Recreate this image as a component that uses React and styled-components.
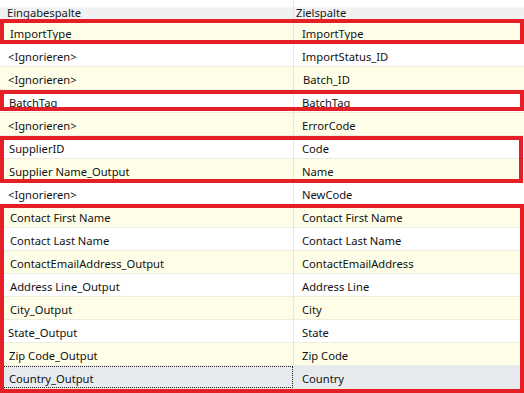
import React from "react";
import styled, { createGlobalStyle } from "styled-components";

const GlobalStyle = createGlobalStyle`
  html, body {
    margin: 0;
    padding: 0;
    background: #fff;
  }
  body {
    font-family: "Segoe UI", "Noto Sans", "Liberation Sans", sans-serif;
    font-size: 11.2px;
    color: #111;
  }
`;

const rowColors = {
  odd: "#fefee8",
  even: "#ffffff",
  selected: "#e7ebf0",
};

const Page = styled.div`
  width: 524px;
  height: 393px;
  overflow: hidden;
  background: #fff;
`;

const HeaderRow = styled.div`
  display: grid;
  grid-template-columns: 293px 1fr;
  height: 21px;
  background: linear-gradient(#ffffff 0%, #ffffff 30%, #f0f1f3 38%, #eff0f2 100%);
`;

const HeaderCell = styled.div`
  display: flex;
  align-items: flex-end;
  padding: 0 0 1px ${(p) => p.pad}px;
  line-height: 14px;
  color: #1a1a1a;
  border-left: ${(p) => (p.divider ? "1px solid #e4e4e4" : "none")};
`;

const Group = styled.div`
  position: relative;

  &::after {
    content: "";
    display: ${(p) => (p.marked ? "block" : "none")};
    position: absolute;
    top: ${(p) => p.top || 0}px;
    bottom: ${(p) => p.bottom || 0}px;
    left: 0;
    right: ${(p) => p.right || 0}px;
    border: 4px solid #e41f26;
    pointer-events: none;
    z-index: 2;
  }
`;

const Row = styled.div`
  display: grid;
  grid-template-columns: 293px 1fr;
  height: 23px;
  box-sizing: border-box;
  border-bottom: 1px solid #ececdf;
  background: ${(p) => rowColors[p.tone]};
`;

const Cell = styled.div`
  display: flex;
  align-items: center;
  padding: 2px 0 0 ${(p) => p.pad}px;
  white-space: nowrap;
  border-left: ${(p) => (p.divider ? "1px solid #e6e6dc" : "none")};
  outline: ${(p) => (p.focused ? "1px dotted #222" : "none")};
  outline-offset: -1px;
`;

const groups = [
  { marked: true, top: -2, bottom: 0, rows: [["ImportType", "ImportType", 10, 8]] },
  {
    marked: false,
    rows: [
      ["<Ignorieren>", "ImportStatus_ID", 8, 8],
      ["<Ignorieren>", "Batch_ID", 8, 9],
    ],
  },
  { marked: true, top: 0, bottom: 2, rows: [["BatchTag", "BatchTag", 9, 8]] },
  { marked: false, rows: [["<Ignorieren>", "ErrorCode", 8, 8]] },
  {
    marked: true,
    top: 0,
    bottom: -1,
    right: 1,
    rows: [
      ["SupplierID", "Code", 9, 8],
      ["Supplier Name_Output", "Name", 9, 8],
    ],
  },
  { marked: false, rows: [["<Ignorieren>", "NewCode", 8, 8]] },
  {
    marked: true,
    top: -1,
    bottom: -4,
    rows: [
      ["Contact First Name", "Contact First Name", 10, 8],
      ["Contact Last Name", "Contact Last Name", 10, 8],
      ["ContactEmailAddress_Output", "ContactEmailAddress", 10, 8],
      ["Address Line_Output", "Address Line", 10, 8],
      ["City_Output", "City", 10, 8],
      ["State_Output", "State", 8, 8],
      ["Zip Code_Output", "Zip Code", 9, 8],
      ["Country_Output", "Country", 9, 8, true],
    ],
  },
];

export default function App() {
  let index = 0;
  return (
    <Page>
      <GlobalStyle />
      <HeaderRow>
        <HeaderCell pad={7}>Eingabespalte</HeaderCell>
        <HeaderCell pad={2} divider>
          Zielspalte
        </HeaderCell>
      </HeaderRow>
      {groups.map((g, gi) => (
        <Group key={gi} marked={g.marked} top={g.top} bottom={g.bottom} right={g.right}>
          {g.rows.map(([src, dst, padL, padR, selected]) => {
            const tone = selected ? "selected" : index % 2 === 0 ? "odd" : "even";
            index += 1;
            return (
              <Row key={index} tone={tone}>
                <Cell pad={padL} focused={selected}>
                  {src}
                </Cell>
                <Cell pad={padR} divider>
                  {dst}
                </Cell>
              </Row>
            );
          })}
        </Group>
      ))}
    </Page>
  );
}
